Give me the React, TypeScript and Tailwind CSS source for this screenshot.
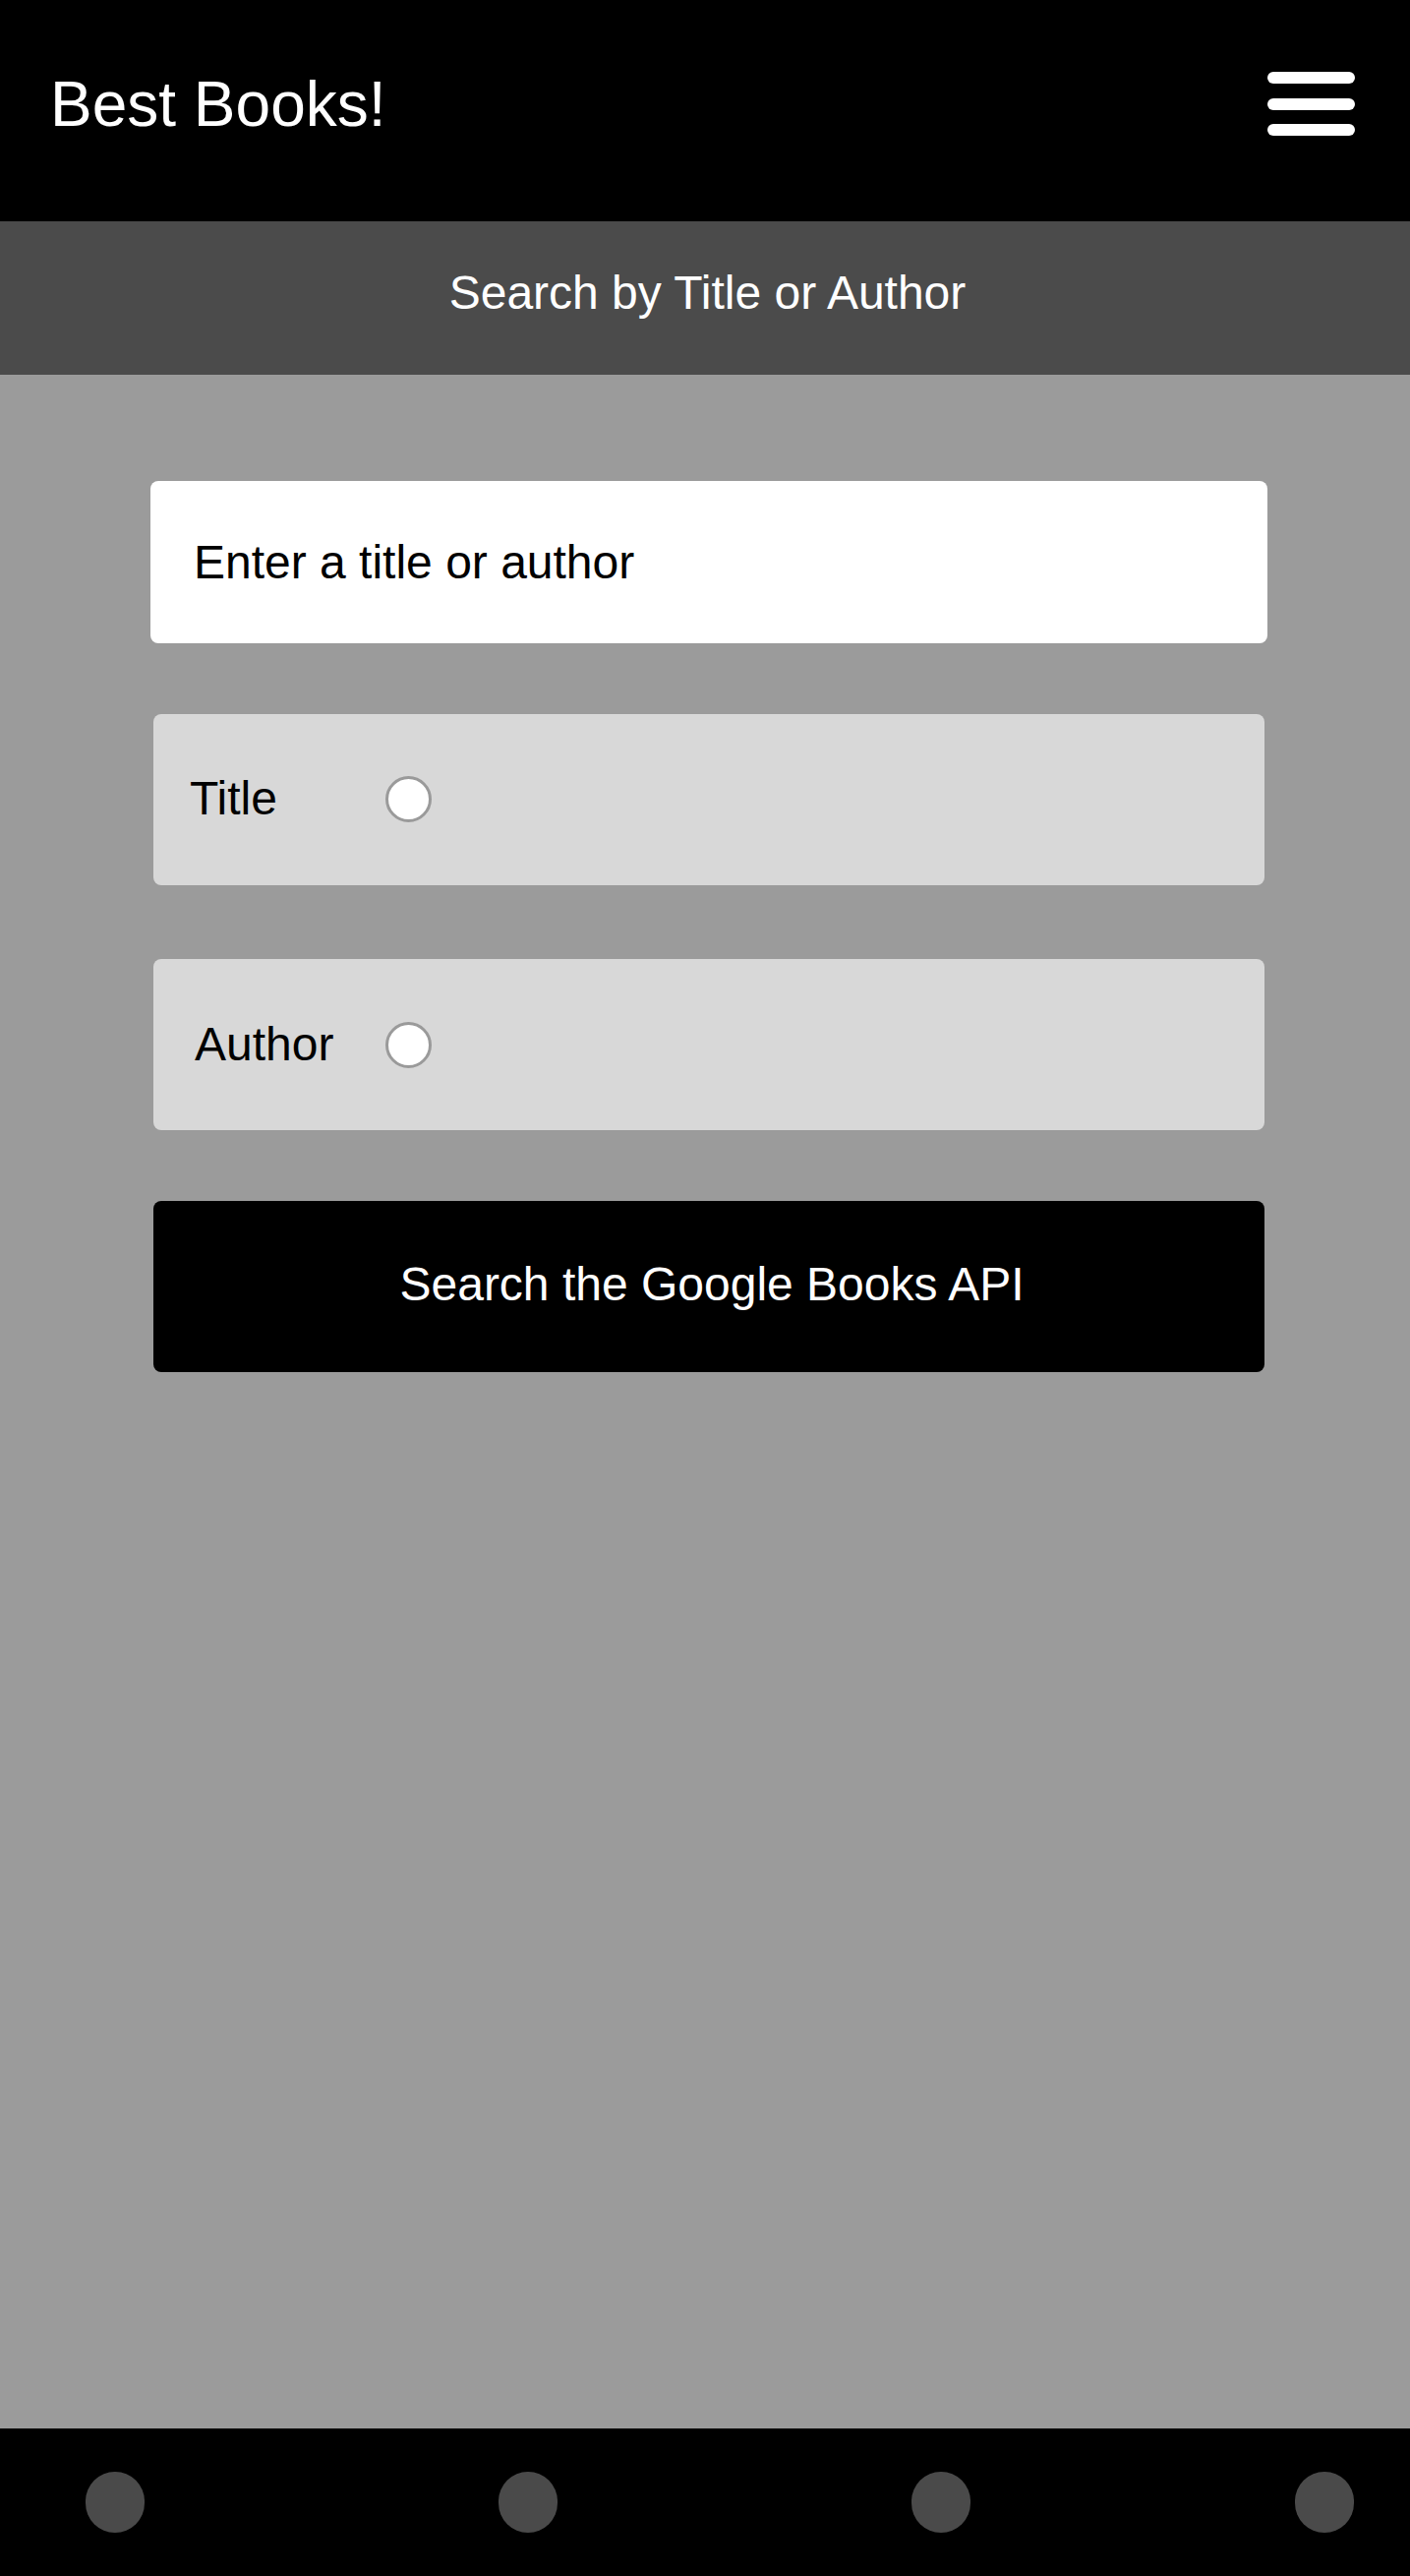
import React, { useState } from 'react';

type SearchBy = 'title' | 'author';

function MenuIcon() {
  return (
    <button className="flex flex-col gap-[14.5px] w-[89px]" aria-label="Menu">
      <span className="block h-[12px] w-full rounded-full bg-white"></span>
      <span className="block h-[12px] w-full rounded-full bg-white"></span>
      <span className="block h-[12px] w-full rounded-full bg-white"></span>
    </button>
  );
}

export default function App() {
  const [query, setQuery] = useState('');
  const [searchBy, setSearchBy] = useState<SearchBy | null>(null);

  return (
    <div className="min-h-screen flex flex-col bg-[#9b9b9b] font-['Liberation_Sans',Arial,sans-serif]">
      {/* 헤더 */}
      <header className="h-[225px] shrink-0 bg-black flex items-center justify-between pl-[51px] pr-[56px] pb-[14px]">
        <h1 className="text-[64px] leading-[74px] text-white">Best Books!</h1>
        <MenuIcon />
      </header>

      {/* 서브 헤더 */}
      <div className="h-[156px] shrink-0 bg-[#4b4b4b] flex items-center justify-center pl-[5px] pb-[11px]">
        <h2 className="text-[48px] leading-[55px] text-white">Search by Title or Author</h2>
      </div>

      {/* 검색 폼 */}
      <main className="flex-1 pl-[153px] pr-[145px] pt-[108px]">
        <input
          type="text"
          value={query}
          onChange={(e) => setQuery(e.target.value)}
          placeholder="Enter a title or author"
          className="block w-full h-[165px] rounded-lg bg-white pl-[44px] text-[48px] text-black placeholder:text-black outline-none"
        />

        <label className="mt-[72px] mx-[3px] h-[174px] rounded-lg bg-[#d8d8d8] flex items-center cursor-pointer pb-[2px]">
          <span className="w-[236px] pl-[37px] text-[48px] text-black">Title</span>
          <input
            type="radio"
            name="searchBy"
            checked={searchBy === 'title'}
            onChange={() => setSearchBy('title')}
            className="appearance-none w-[47px] h-[47px] rounded-full bg-white border-[3px] border-[#9a9a9a] checked:bg-black"
          />
        </label>

        <label className="mt-[75px] mx-[3px] h-[174px] rounded-lg bg-[#d8d8d8] flex items-center cursor-pointer">
          <span className="w-[236px] pl-[42px] text-[48px] text-black">Author</span>
          <input
            type="radio"
            name="searchBy"
            checked={searchBy === 'author'}
            onChange={() => setSearchBy('author')}
            className="appearance-none w-[47px] h-[47px] rounded-full bg-white border-[3px] border-[#9a9a9a] checked:bg-black"
          />
        </label>

        <button className="mt-[72px] mx-[3px] w-[calc(100%-6px)] h-[174px] rounded-lg bg-black text-white text-[48px] flex items-center justify-center pl-[6px] pb-[5px]">
          Search the Google Books API
        </button>
      </main>

      {/* 하단 내비게이션 */}
      <footer className="h-[150px] shrink-0 bg-black flex items-center pl-[87px]">
        <span className="block w-[60px] h-[62px] rounded-full bg-[#4a4a4a]"></span>
        <span className="block w-[60px] h-[62px] rounded-full bg-[#4a4a4a] ml-[360px]"></span>
        <span className="block w-[60px] h-[62px] rounded-full bg-[#4a4a4a] ml-[360px]"></span>
        <span className="block w-[60px] h-[62px] rounded-full bg-[#4a4a4a] ml-[330px]"></span>
      </footer>
    </div>
  );
}
